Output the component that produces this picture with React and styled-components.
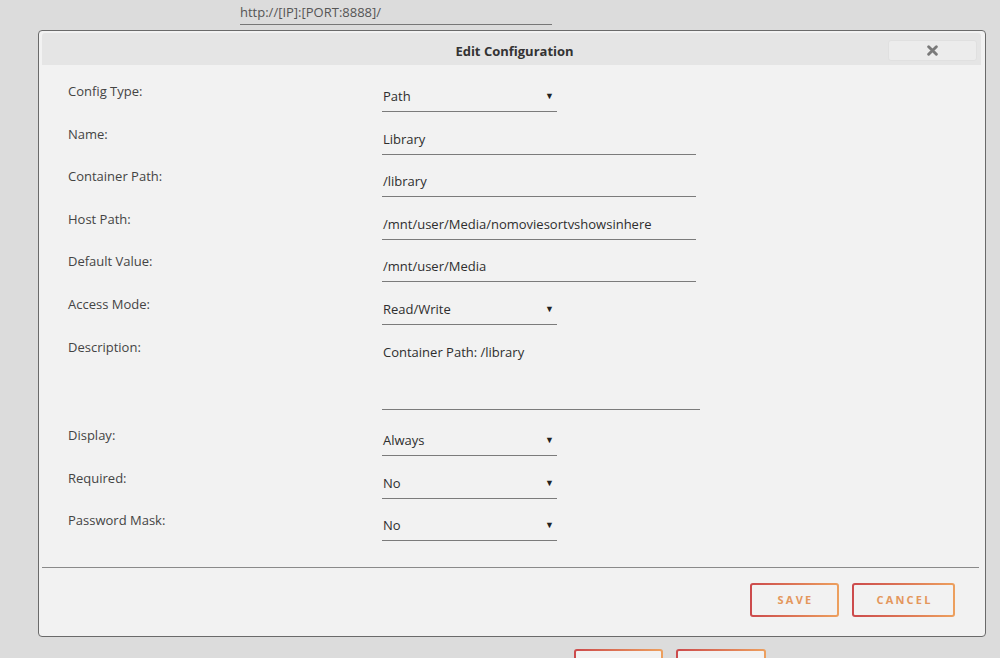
import styled, { createGlobalStyle } from "styled-components";

const GlobalStyle = createGlobalStyle`
  html, body {
    margin: 0;
    padding: 0;
    background: #dcdcdc;
    font-family: "Open Sans", "Noto Sans", sans-serif;
    font-size: 13px;
    color: #333;
  }
`;

const fields = [
  { label: "Config Type:", value: "Path", kind: "select" },
  { label: "Name:", value: "Library", kind: "text" },
  { label: "Container Path:", value: "/library", kind: "text" },
  { label: "Host Path:", value: "/mnt/user/Media/nomoviesortvshowsinhere", kind: "text" },
  { label: "Default Value:", value: "/mnt/user/Media", kind: "text" },
  { label: "Access Mode:", value: "Read/Write", kind: "select" },
  { label: "Description:", value: "Container Path: /library", kind: "area" },
  { label: "Display:", value: "Always", kind: "select" },
  { label: "Required:", value: "No", kind: "select" },
  { label: "Password Mask:", value: "No", kind: "select" },
];

const App = () => {
  return (
    <Page>
      <GlobalStyle />
      <UrlField>http://[IP]:[PORT:8888]/</UrlField>
      <Dialog>
        <TitleBar>
          <Title>Edit Configuration</Title>
          <CloseButton>
            <svg width="11" height="11" viewBox="0 0 10 10">
              <path d="M1.5 1.5 L8.5 8.5 M8.5 1.5 L1.5 8.5" stroke="#7a7a7a" strokeWidth="2.6" strokeLinecap="round" />
            </svg>
          </CloseButton>
        </TitleBar>
        <Form>
          {fields.map((f) => (
            <Row key={f.label} $tall={f.kind === "area"}>
              <Label>{f.label}</Label>
              <Input $kind={f.kind}>
                <span>{f.value}</span>
                {f.kind === "select" && <Arrow>▼</Arrow>}
              </Input>
            </Row>
          ))}
        </Form>
        <Divider />
        <Footer>
          <Button $w={89}>SAVE</Button>
          <Button $w={103}>CANCEL</Button>
        </Footer>
      </Dialog>
      <BehindButtons>
        <Button $w={89} />
        <Button $w={90} />
      </BehindButtons>
    </Page>
  );
};

const Page = styled.div`
  width: 1000px;
  height: 658px;
  overflow: hidden;
`;

const UrlField = styled.div`
  margin-left: 240px;
  width: 312px;
  padding: 3px 0 3px;
  line-height: 18px;
  color: #555;
  border-bottom: 1px solid #777;
`;

const Dialog = styled.div`
  margin: 5px 0 0 38px;
  width: 939px;
  height: 603px;
  border: 1px solid #6a6a6a;
  border-radius: 4px;
  background: #f2f2f2;
  padding: 2px 4px 0 3px;
  display: flex;
  flex-direction: column;
`;

const TitleBar = styled.div`
  height: 32px;
  background: #e5e5e5;
  border-radius: 3px 3px 0 0;
  display: flex;
  align-items: center;
  justify-content: center;
  position: relative;
`;

const Title = styled.div`
  font-weight: 700;
  font-size: 13px;
  color: #333;
  margin: 3px 0 0 6px;
`;

const CloseButton = styled.div`
  position: absolute;
  right: 4px;
  top: 7px;
  width: 87px;
  height: 19px;
  background: #ececec;
  border: 1px solid #e0e0e0;
  border-radius: 3px;
  display: flex;
  align-items: center;
  justify-content: center;
`;

const Form = styled.div`
  padding: 11px 0 0 26px;
  display: flex;
  flex-direction: column;
`;

const Row = styled.div`
  display: grid;
  grid-template-columns: 314px 1fr;
  height: ${(p) => (p.$tall ? "88.4px" : "42.6px")};
`;

const Label = styled.div`
  padding-top: 6px;
  line-height: 18px;
  color: #444;
`;

const Input = styled.div`
  width: ${(p) => (p.$kind === "select" ? "174px" : p.$kind === "area" ? "317px" : "313px")};
  height: ${(p) => (p.$kind === "area" ? "60px" : "18px")};
  padding: 11px 0 6px 1px;
  line-height: 18px;
  border-bottom: 1px solid #7b7b7b;
  color: #2e2e2e;
  display: flex;
  align-items: flex-start;
  justify-content: space-between;
`;

const Arrow = styled.span`
  font-size: 9px;
  color: #222;
  margin-right: 3px;
`;

const Divider = styled.div`
  margin: 19px 2px 0 0;
  height: 1px;
  background: #8a8a8a;
`;

const Footer = styled.div`
  display: flex;
  justify-content: flex-end;
  gap: 13px;
  padding: 15px 26px 0 0;
`;

const Button = styled.div`
  width: ${(p) => p.$w}px;
  height: 34px;
  box-sizing: border-box;
  border: 2px solid transparent;
  border-radius: 3px;
  background:
    linear-gradient(#f2f2f2, #f2f2f2) padding-box,
    linear-gradient(90deg, #cc4a4c, #eda05e) border-box;
  display: flex;
  align-items: center;
  justify-content: center;
  font-size: 11px;
  font-weight: 700;
  letter-spacing: 2.2px;
  color: #e4975c;
  padding-left: 2px;
`;

const BehindButtons = styled.div`
  display: flex;
  gap: 13px;
  margin: 12px 0 0 574px;
`;

export default App;
